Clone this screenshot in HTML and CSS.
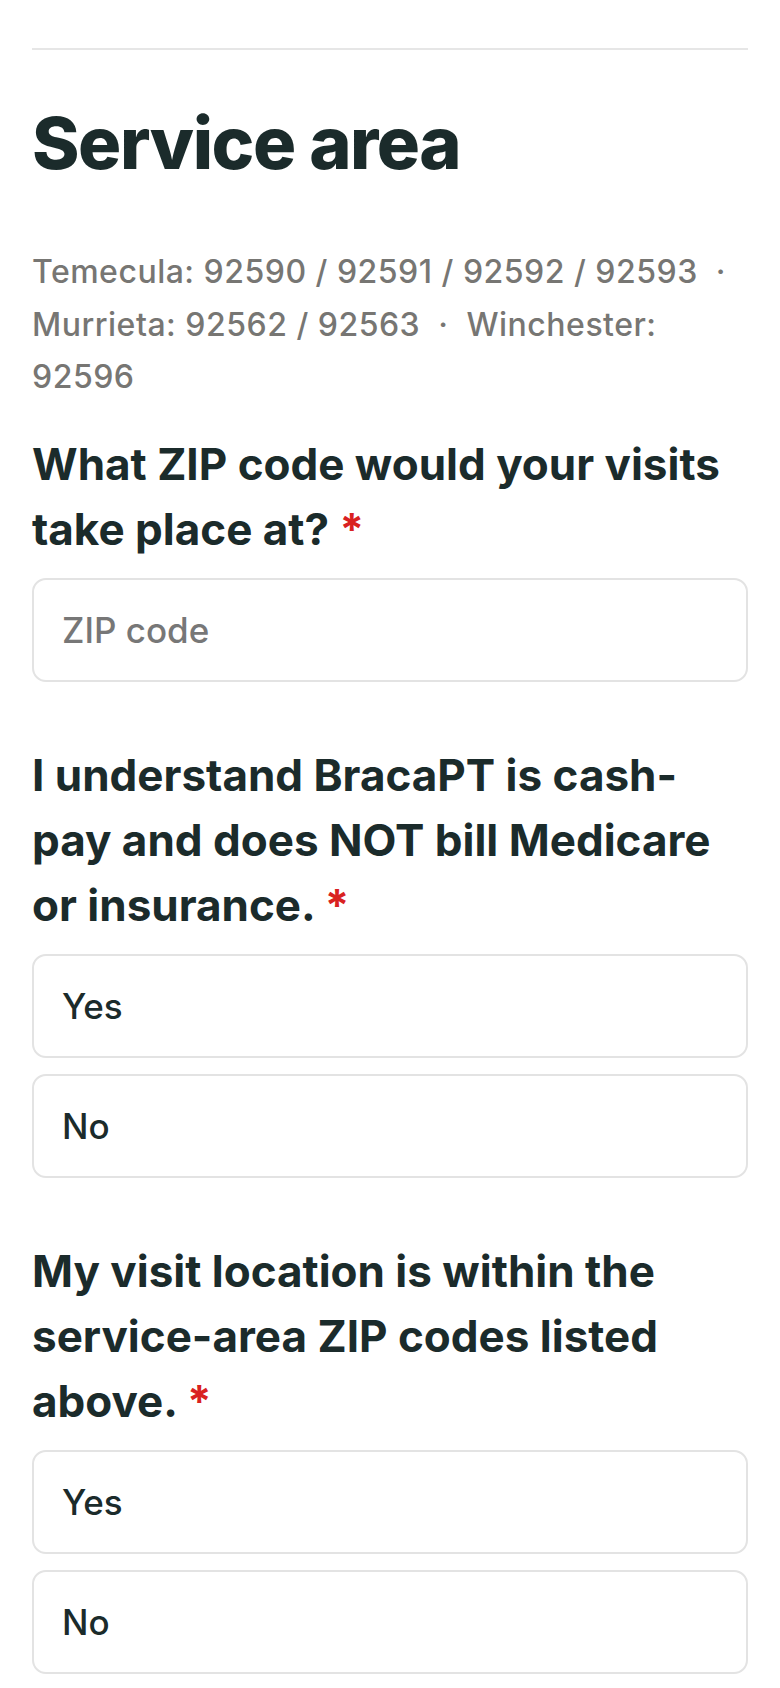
FILE: index.html
```html
<!DOCTYPE html>
<html>
<head>
    <meta charset="utf-8">
    <title>Book a visit - Service area</title>
    <link rel="stylesheet" href="styles.css">
</head>
<body>
    <div class="page">
        <hr class="divider">
        <section class="service-area">
            <h2 class="section-title">Service area</h2>
            <p class="zip-list">Temecula: 92590 / 92591 / 92592 / 92593 &nbsp;·&nbsp; Murrieta: 92562 / 92563 &nbsp;·&nbsp; Winchester: 92596</p>

            <div class="field">
                <label class="field-label" for="zipInput">What ZIP code would your visits take place at? <span class="req">*</span></label>
                <input type="text" id="zipInput" class="text-input" placeholder="ZIP code" inputmode="numeric">
            </div>

            <div class="field">
                <div class="field-label">I understand BracaPT is cash-pay and does NOT bill Medicare or insurance. <span class="req">*</span></div>
                <div class="options">
                    <button type="button" class="option">Yes</button>
                    <button type="button" class="option">No</button>
                </div>
            </div>

            <div class="field">
                <div class="field-label">My visit location is within the service-area ZIP codes listed above. <span class="req">*</span></div>
                <div class="options">
                    <button type="button" class="option">Yes</button>
                    <button type="button" class="option">No</button>
                </div>
            </div>
        </section>
    </div>
</body>
</html>
```

FILE: styles.css
```css
body {
    margin: 0;
    padding: 0;
    background-color: #ffffff;
    font-family: Inter, "Open Sans", sans-serif;
    color: #1b2b2b;
}

.page {
    padding: 48px 32px 40px;
}

.divider {
    margin: 0;
    border: none;
    border-top: 2px solid #e6e6e6;
}

.section-title {
    margin: 50px 0 60px;
    font-size: 72px;
    line-height: 1.2;
    font-weight: 800;
    letter-spacing: -0.02em;
    color: #1b2b2b;
}

.zip-list {
    margin: 0;
    font-size: 32px;
    line-height: 52.5px;
    font-weight: 500;
    letter-spacing: 0.5px;
    color: #777673;
}

.field {
    margin-top: 61px;
}

.zip-list + .field {
    margin-top: 28px;
}

.field-label {
    display: block;
    margin-bottom: 16px;
    font-size: 44px;
    line-height: 65px;
    font-weight: 700;
    letter-spacing: 0;
    color: #1b2b2b;
}

.req {
    color: #d92121;
}

.text-input,
.option {
    display: block;
    box-sizing: border-box;
    width: 100%;
    height: 104px;
    margin: 0;
    padding: 0 28px;
    border: 2px solid #e3e3e3;
    border-radius: 14px;
    background-color: #ffffff;
    font-family: Inter, "Open Sans", sans-serif;
    font-size: 35px;
    font-weight: 500;
    color: #1b2b2b;
    text-align: left;
}

.text-input::placeholder {
    color: #777777;
}

.options {
    display: flex;
    flex-direction: column;
    gap: 16px;
}

.option {
    cursor: pointer;
}
```
